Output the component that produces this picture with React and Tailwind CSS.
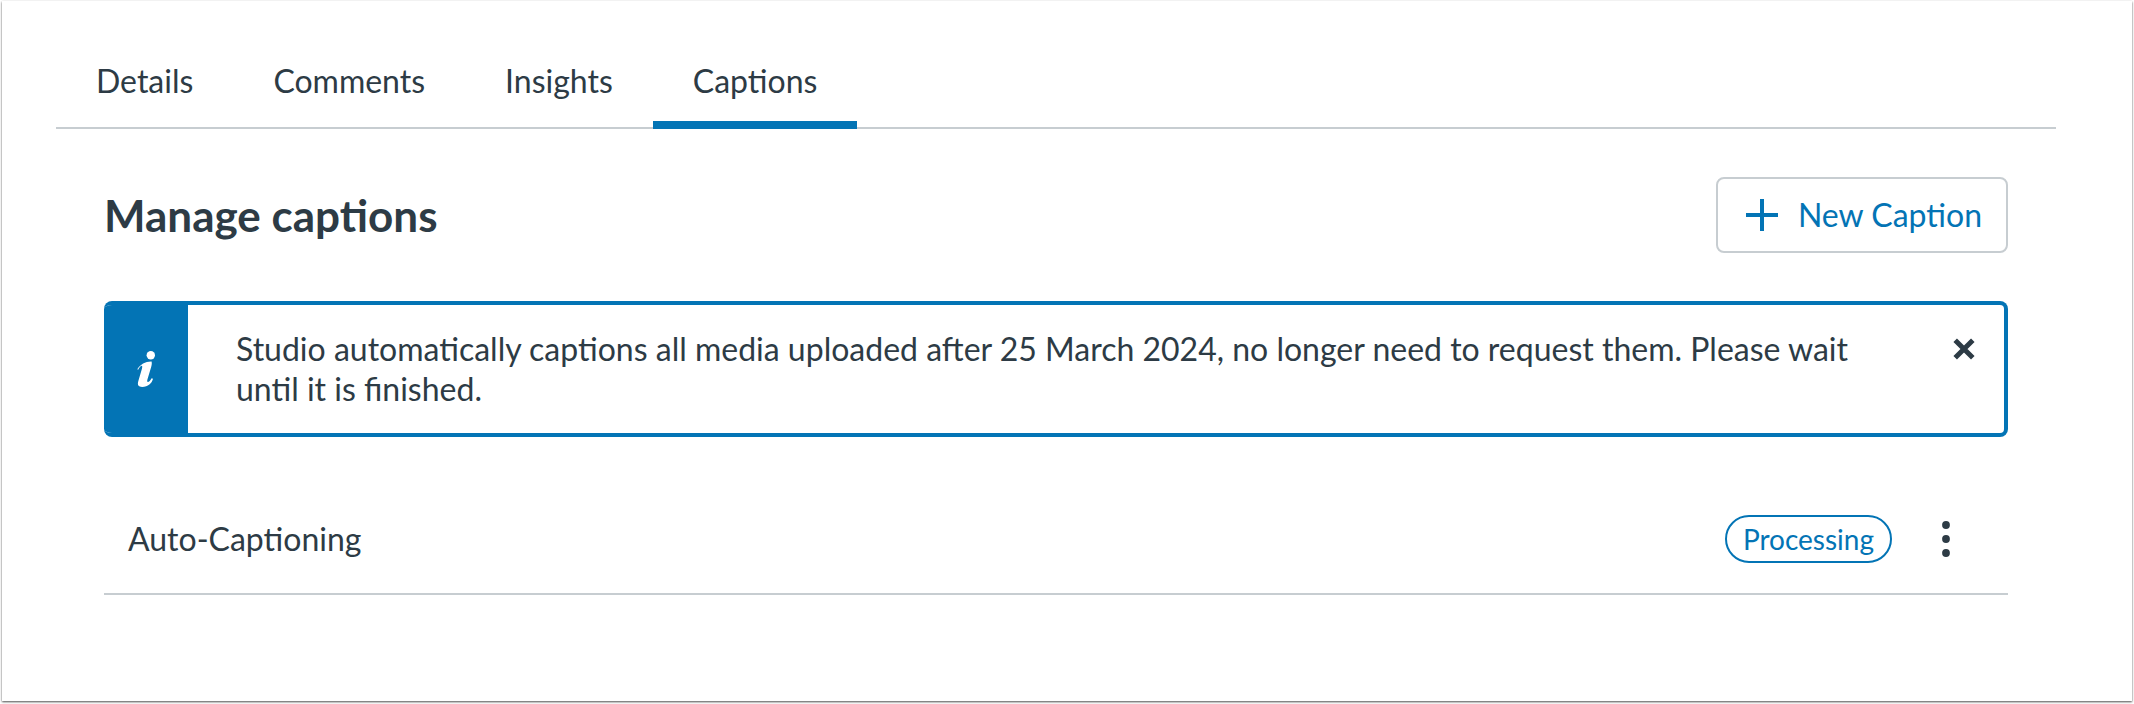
import { useState } from "react";

const tabs = ["Details", "Comments", "Insights", "Captions"];

function TabBar({ active, onSelect }) {
  return (
    <div role="tablist" className="flex border-b-2 border-[#c7cdd1] pt-8">
      {tabs.map((tab) => (
        <button
          key={tab}
          type="button"
          role="tab"
          aria-selected={tab === active}
          onClick={() => onSelect(tab)}
          className={`-mb-[2px] border-b-8 px-10 pt-7 pb-5 leading-10 ${tab === active ? "border-[#0374b5]" : "border-transparent"}`}
        >
          {tab}
        </button>
      ))}
    </div>
  );
}

function InfoAlert({ children, onClose }) {
  return (
    <div role="status" className="mt-12 flex overflow-hidden rounded-lg border-y-4 border-r-4 border-[#0374b5]">
      <div className="flex w-21 shrink-0 items-center justify-center bg-[#0374b5] text-white">
        <svg viewBox="0 0 18 36" className="h-9 w-[18px]" fill="currentColor" aria-hidden="true">
          <circle cx="13.8" cy="4.2" r="4.2" />
          <path d="M0.3 18.2C3.5 13.2 8.5 10.2 14.6 10.4C15.1 12.2 14.7 14.2 14.1 16.2L10.5 28.3C10 29.9 10.1 31 10.9 31C12 31 13.4 29.2 14.6 27.2L16 27.8C15 32.2 11 36 5.2 36C1.3 36 0.3 34 1.2 30.6L5 17.4C5.5 15.5 5.3 14.6 4.2 14.9C3 15.2 2 17 1.2 18.8Z" />
        </svg>
      </div>
      <p className="flex-1 py-6 pr-10 pl-12 leading-10">{children}</p>
      <button type="button" aria-label="Close" onClick={onClose} className="mt-5 mr-4 flex size-12 items-center justify-center self-start">
        <svg viewBox="0 0 22 22" className="size-[22px]" fill="none" stroke="currentColor" strokeWidth="5" aria-hidden="true">
          <path d="M2.2 2.2L19.8 19.8M19.8 2.2L2.2 19.8" />
        </svg>
      </button>
    </div>
  );
}

function CaptionRow({ name, status }) {
  return (
    <li className="flex items-center border-b-2 border-[#c7cdd1] px-6 py-[30px]">
      <span className="flex-1 leading-10">{name}</span>
      <span className="flex h-12 items-center rounded-full border-2 border-[#0374b5] px-4 text-[28px] leading-8 text-[#0374b5]">
        {status}
      </span>
      <button type="button" aria-label={`Options for ${name}`} className="mr-4 ml-8 flex h-12 w-11 items-center justify-center">
        <svg viewBox="0 0 8 36" className="h-9 w-2" fill="currentColor" aria-hidden="true">
          <circle cx="4" cy="4" r="3.9" />
          <circle cx="4" cy="18" r="3.9" />
          <circle cx="4" cy="32" r="3.9" />
        </svg>
      </button>
    </li>
  );
}

export default function App() {
  const [active, setActive] = useState("Captions");
  const [showInfo, setShowInfo] = useState(true);

  return (
    <div className="h-screen bg-white px-[2px] pt-px pb-[3px]">
      <main className="h-full bg-white pr-[76px] pl-[54px] font-['Lato',sans-serif] text-[32px] text-[#2d3b45] shadow-[0_1px_2px_rgba(0,0,0,0.7)]">
        <TabBar active={active} onSelect={setActive} />
        <section className="px-12 pt-12">
          <div className="flex items-center justify-between">
            <h1 className="text-[44px] leading-[52px] font-bold">Manage captions</h1>
            <button type="button" className="flex h-19 items-center gap-5 rounded-lg border-2 border-[#c7cdd1] pr-6 pl-7 text-[#0374b5]">
              <svg viewBox="0 0 32 32" className="size-8" fill="none" stroke="currentColor" strokeWidth="4" aria-hidden="true">
                <path d="M16 0V32M0 16H32" />
              </svg>
              New Caption
            </button>
          </div>
          {showInfo && (
            <InfoAlert onClose={() => setShowInfo(false)}>
              Studio automatically captions all media uploaded after 25 March 2024, no longer need to request them. Please wait until it is finished.
            </InfoAlert>
          )}
          <ul className="mt-12">
            <CaptionRow name="Auto-Captioning" status="Processing" />
          </ul>
        </section>
      </main>
    </div>
  );
}
